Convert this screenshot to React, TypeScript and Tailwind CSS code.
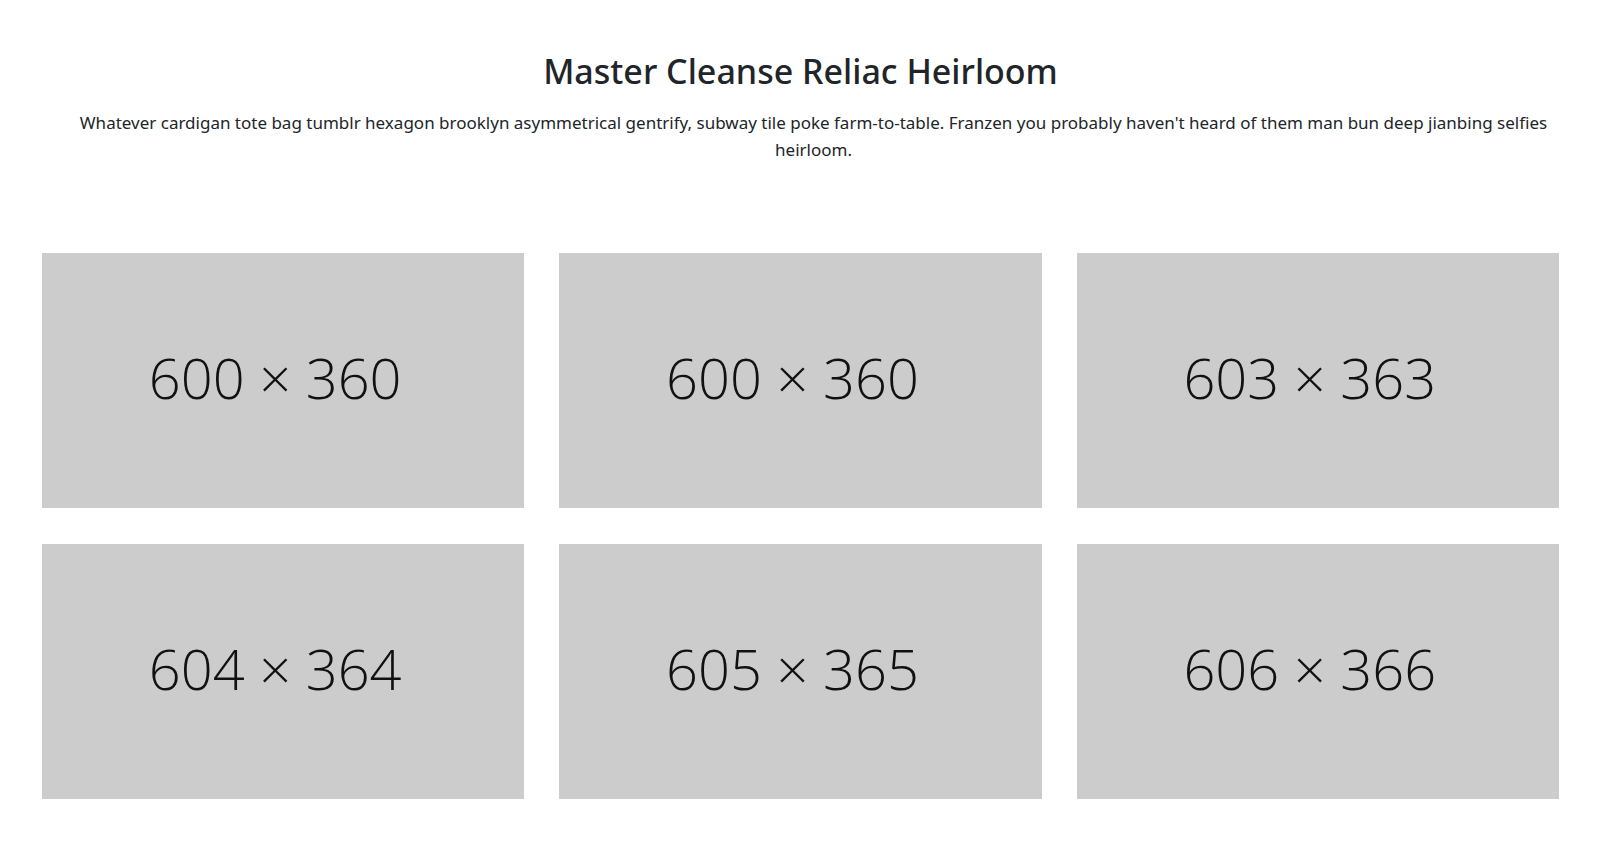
const images = [
  "600 × 360",
  "600 × 360",
  "603 × 363",
  "604 × 364",
  "605 × 365",
  "606 × 366",
];

export default function App() {
  return (
    <div className="min-h-screen bg-white text-[#212529]" style={{ fontFamily: '"Noto Sans", "Open Sans", sans-serif' }}>
      <section className="px-[42px] pt-[44px] pb-[60px]">
        {/* Heading */}
        <div className="flex flex-col items-center text-center mb-[90px]">
          <h1 className="text-[34px] leading-[54px] font-medium">Master Cleanse Reliac Heirloom</h1>
          <p className="mt-[12px] pl-[26px] text-[17px] leading-[26.5px]">
            Whatever cardigan tote bag tumblr hexagon brooklyn asymmetrical gentrify, subway tile poke farm-to-table. Franzen you probably haven't heard of them man bun deep jianbing selfies heirloom.
          </p>
        </div>

        {/* Gallery */}
        <div className="grid grid-cols-3 gap-x-[35px] gap-y-[36px]">
          {images.map((label, i) => (
            <div
              key={i}
              className="h-[255px] bg-[#cccccc] flex items-center justify-center"
            >
              <span
                className="text-[56px] font-extralight text-[#111] pr-4 pb-2"
                style={{ fontFamily: '"Open Sans", sans-serif' }}
              >
                {label}
              </span>
            </div>
          ))}
        </div>
      </section>
    </div>
  );
}
